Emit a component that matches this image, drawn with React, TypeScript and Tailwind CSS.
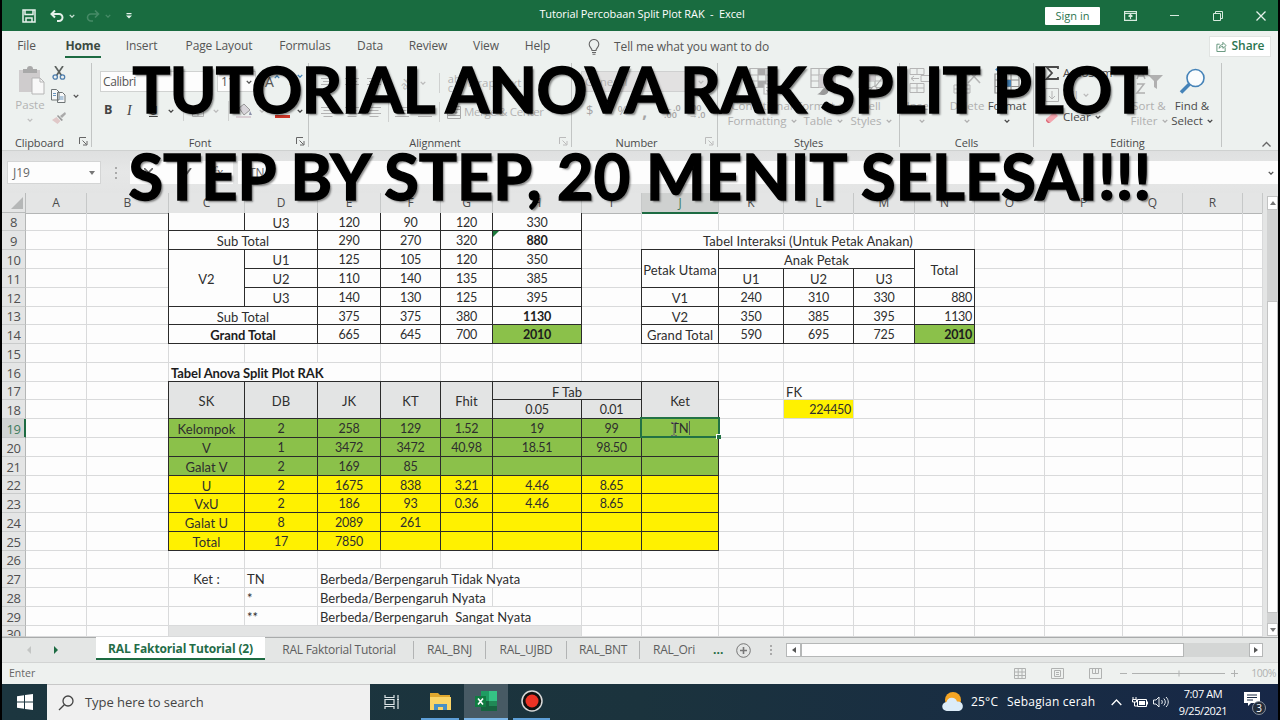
import type { ReactNode } from 'react'
import clsx from 'clsx'

type Fill = 'none' | 'white' | 'gray' | 'green' | 'yellow'

interface Cell {
  at: string
  text?: string
  cols?: number
  rows?: number
  fill?: Fill
  align?: 'left' | 'center' | 'right'
  bold?: boolean
  border?: boolean
}

const COLS = 'ABCDEFGHIJKLMNOPQR'.split('')
const FIRST_ROW = 8
const ROWS = Array.from({ length: 23 }, (_, i) => FIRST_ROW + i)

const GRID_COLS = 'grid-cols-[61px_82px_76px_73px_63px_60px_52px_89px_60px_77px_65px_70px_61px_60px_70px_78px_60px_60px_20px]'
const GRID_ROWS = 'grid-rows-[18px_19px_19px_19px_19px_18px_19px_19px_19px_18px_19px_19px_19px_19px_18px_19px_19px_19px_18px_19px_19px_19px_11px]'

const FILLS: Record<Fill, string> = {
  none: '',
  white: 'bg-[#fdfdfd]',
  gray: 'bg-[#e3e4e4]',
  green: 'bg-[#8bc14a]',
  yellow: 'bg-[#fff100]',
}

const line = (row: number, start: string, values: (string | number)[], extra: Partial<Cell> = {}): Cell[] =>
  values.map((v, i) => ({
    at: `${COLS[COLS.indexOf(start) + i]}${row}`,
    text: String(v),
    border: true,
    ...extra,
  }))

const CELLS: Cell[] = [
  // treatment totals
  ...line(8, 'C', ['', 'U3', 120, 90, 120, 330]),
  { at: 'C9', cols: 2, text: 'Sub Total', border: true },
  ...line(9, 'E', [290, 270, 320]),
  { at: 'H9', text: '880', bold: true, border: true },
  { at: 'C10', rows: 3, text: 'V2', border: true },
  ...line(10, 'D', ['U1', 125, 105, 120, 350]),
  ...line(11, 'D', ['U2', 110, 140, 135, 385]),
  ...line(12, 'D', ['U3', 140, 130, 125, 395]),
  { at: 'C13', cols: 2, text: 'Sub Total', border: true },
  ...line(13, 'E', [375, 375, 380]),
  { at: 'H13', text: '1130', bold: true, border: true },
  { at: 'C14', cols: 2, text: 'Grand Total', bold: true, border: true },
  ...line(14, 'E', [665, 645, 700]),
  { at: 'H14', text: '2010', bold: true, fill: 'green', border: true },

  // interaction table
  { at: 'J9', cols: 5, text: 'Tabel Interaksi (Untuk Petak Anakan)', fill: 'white' },
  { at: 'J10', rows: 2, text: 'Petak Utama', border: true },
  { at: 'K10', cols: 3, text: 'Anak Petak', border: true },
  { at: 'N10', rows: 2, text: 'Total', border: true },
  ...line(11, 'K', ['U1', 'U2', 'U3']),
  ...line(12, 'J', ['V1', 240, 310, 330]),
  { at: 'N12', text: '880', align: 'right', border: true },
  ...line(13, 'J', ['V2', 350, 385, 395]),
  { at: 'N13', text: '1130', align: 'right', border: true },
  ...line(14, 'J', ['Grand Total', 590, 695, 725]),
  { at: 'N14', text: '2010', align: 'right', bold: true, fill: 'green', border: true },

  // anova table
  { at: 'C16', cols: 3, text: 'Tabel Anova Split Plot RAK', bold: true, align: 'left', fill: 'white' },
  ...line(17, 'C', ['SK', 'DB', 'JK', 'KT', 'Fhit'], { rows: 2, fill: 'gray' }),
  { at: 'H17', cols: 2, text: 'F Tab', fill: 'gray', border: true },
  { at: 'J17', rows: 2, text: 'Ket', fill: 'gray', border: true },
  ...line(18, 'H', ['0.05', '0.01'], { fill: 'gray' }),
  ...line(19, 'C', ['Kelompok', 2, 258, 129, '1.52', 19, 99, ''], { fill: 'green' }),
  ...line(20, 'C', ['V', 1, 3472, 3472, '40.98', '18.51', '98.50', ''], { fill: 'green' }),
  ...line(21, 'C', ['Galat V', 2, 169, 85, '', '', '', ''], { fill: 'green' }),
  ...line(22, 'C', ['U', 2, 1675, 838, '3.21', '4.46', '8.65', ''], { fill: 'yellow' }),
  ...line(23, 'C', ['VxU', 2, 186, 93, '0.36', '4.46', '8.65', ''], { fill: 'yellow' }),
  ...line(24, 'C', ['Galat U', 8, 2089, 261, '', '', '', ''], { fill: 'yellow' }),
  ...line(25, 'C', ['Total', 17, 7850, '', '', '', '', ''], { fill: 'yellow' }),

  { at: 'L17', text: 'FK', align: 'left' },
  { at: 'L18', text: '224450', align: 'right', fill: 'yellow' },

  // legend
  { at: 'C27', text: 'Ket :' },
  { at: 'D27', text: 'TN', align: 'left' },
  { at: 'E27', cols: 4, text: 'Berbeda/Berpengaruh Tidak Nyata', align: 'left', fill: 'white' },
  { at: 'D28', text: '*', align: 'left' },
  { at: 'E28', cols: 3, text: 'Berbeda/Berpengaruh Nyata', align: 'left', fill: 'white' },
  { at: 'D29', text: '**', align: 'left' },
  { at: 'E29', cols: 4, text: 'Berbeda/Berpengaruh  Sangat Nyata', align: 'left', fill: 'white' },
  { at: 'C30', cols: 6, fill: 'gray' },
]

function SheetCell({ cell }: { cell: Cell }) {
  const col = COLS.indexOf(cell.at[0]) + 1
  const row = Number(cell.at.slice(1)) - FIRST_ROW + 1
  const numeric = /^[\d.]+$/.test(cell.text ?? '')
  return (
    <div
      style={{ gridColumn: `${col} / span ${cell.cols ?? 1}`, gridRow: `${row} / span ${cell.rows ?? 1}` }}
      className={clsx(
        'flex min-w-0 items-center overflow-hidden whitespace-pre leading-none',
        cell.border ? '-ml-px -mt-px border border-[#2b2b2b] pt-[3px]' : 'mb-px mr-px pt-[3px]',
        FILLS[cell.fill ?? (cell.border ? 'white' : 'none')],
        cell.align === 'left' && 'justify-start pl-[2px]',
        cell.align === 'right' && 'justify-end pr-[2px]',
        (!cell.align || cell.align === 'center') && 'justify-center',
        cell.bold ? 'font-bold text-[#1c1c1c]' : 'text-[#2e2e2e]',
        numeric ? 'text-[12.5px] tracking-[-0.3px]' : cell.bold ? 'text-[13px] tracking-[-0.1px]' : 'text-[13px] tracking-[0.05px]',
      )}
    >
      {cell.text}
    </div>
  )
}

function Chevron({ className = 'text-[#555]' }: { className?: string }) {
  return (
    <svg viewBox="0 0 8 5" className={clsx('h-[4px] w-[6px] shrink-0', className)} fill="none" stroke="currentColor" strokeWidth="1.8">
      <path d="M1 1l3 3 3-3" />
    </svg>
  )
}

function Launcher({ className = 'text-[#666]' }: { className?: string }) {
  return (
    <svg viewBox="0 0 9 9" className={clsx('absolute bottom-[1px] right-[3px] h-[9px] w-[9px]', className)} fill="none" stroke="currentColor">
      <path d="M.5 7V.5H7M3.5 3.5l4 4M8 4v4H4" />
    </svg>
  )
}

function Group({ label, width, launcher, children }: { label: string; width: string; launcher?: string; children: ReactNode }) {
  return (
    <section className={clsx('relative flex h-[84px] shrink-0 flex-col border-r border-[#c2c5c4]', width)}>
      <div className="h-[73px] shrink-0">{children}</div>
      <div className="text-center text-[11px] leading-[14px] tracking-[-0.1px] text-[#4a4a4a]">{label}</div>
      {launcher && <Launcher className={launcher} />}
    </section>
  )
}

function Lines({ widths, className = '' }: { widths: number[]; className?: string }) {
  return (
    <svg viewBox="0 0 14 13" className={clsx('h-[13px] w-[14px] shrink-0 text-[#b3b3b3]', className)} stroke="currentColor">
      {widths.map((w, i) => (
        <path key={i} d={`M${(14 - w) / 2} ${i * 3 + 1.5}h${w}`} />
      ))}
    </svg>
  )
}

function GridIcon({ active = false, children }: { active?: boolean; children?: ReactNode }) {
  return (
    <svg viewBox="0 0 28 28" className={clsx('h-[28px] w-[28px]', active ? 'text-[#8c8c8c]' : 'text-[#b5b5b5]')} fill="none" stroke="currentColor" strokeWidth="1.2">
      <path d={active ? 'M2 7h24v19H2zM2 13h24M2 19.500h24M10 7v19M18 7v19' : 'M2 1.500h24v19H2zM2 8h24M2 14h24M10 1.500v19M18 1.500v19'} />
      {active && (
        <>
          <path d="M3 2.500h21M6 0L3 2.500 6 5M21 0l3 2.500L21 5" stroke="#4583b8" />
          <path d="M10 13h8v6.500h-8z" fill="#4583b8" stroke="none" />
        </>
      )}
      {children}
    </svg>
  )
}

function BigButton({ icon, lines, width, dark, chevronBelow }: { icon: ReactNode; lines: string[]; width: string; dark?: boolean; chevronBelow?: boolean }) {
  const tone = dark ? 'text-[#4a4a4a]' : 'text-[#b0b0b0]'
  return (
    <div className={clsx('flex shrink-0 flex-col items-center text-[11.5px] leading-[15px]', tone, width)}>
      <div className="flex h-[35px] items-center pt-[1px]">{icon}</div>
      <div className="whitespace-nowrap">{lines[0]}</div>
      <div className="flex h-[15px] items-center gap-1 whitespace-nowrap">
        {lines[1]}
        {(lines[1] || chevronBelow) && <Chevron className={tone} />}
      </div>
    </div>
  )
}

function TitleBar() {
  return (
    <header className="flex h-[31px] shrink-0 items-center bg-[#196c40] text-white">
      <div className="flex w-[420px] items-center pl-[20px]">
        <svg viewBox="0 0 14 14" className="h-[14px] w-[14px]" fill="none" stroke="#e6f1eb" strokeWidth="1.5">
          <path d="M1 1h12v12H1zM3 1v4.500h8V1M4 13V9h6v4" />
        </svg>
        <svg viewBox="0 0 14 12" className="ml-[14px] h-[12px] w-[14px]" fill="none" stroke="#e6f1eb" strokeWidth="2">
          <path d="M5 .5L1.500 4 5 7.500M1.500 4H9a3.500 3.500 0 010 7H7" />
        </svg>
        <Chevron className="ml-[5px] text-[#c7dfd2]" />
        <svg viewBox="0 0 14 12" className="ml-[11px] h-[12px] w-[14px]" fill="none" stroke="#468a66" strokeWidth="1.600">
          <path d="M9 .5L12.500 4 9 7.500M12.500 4H5a3.500 3.500 0 000 7h2" />
        </svg>
        <Chevron className="ml-[5px] text-[#468a66]" />
        <svg viewBox="0 0 6 6" className="ml-[15px] h-[6px] w-[6px]">
          <path d="M.5 0h5v1.200h-5zM0 2.500h6l-3 3z" fill="#e6f1eb" />
        </svg>
      </div>
      <h1 className="-mt-[2px] w-[440px] whitespace-pre text-center text-[11px] tracking-[-0.1px]">Tutorial Percobaan Split Plot RAK  -  Excel</h1>
      <div className="flex flex-1 items-center justify-end pr-[12px]">
        <button type="button" className="mr-[24px] h-[18px] w-[55px] rounded-[1px] bg-white text-[11px] leading-[18px] text-[#2c7550]">Sign in</button>
        <svg viewBox="0 0 13 10" className="mr-[33px] h-[10px] w-[13px]" fill="none" stroke="#d8eadf" strokeWidth="1.200">
          <path d="M.6 .6h11.800v8.800H.6zM.6 2.500h11.800M6.500 8V4M4.500 5.500l2-2 2 2" />
        </svg>
        <svg viewBox="0 0 9 1" className="mr-[34px] h-px w-[9px] overflow-visible" stroke="#d8eadf">
          <path d="M0 .5h9" />
        </svg>
        <svg viewBox="0 0 10 10" className="mr-[33px] h-[10px] w-[10px]" fill="none" stroke="#d8eadf">
          <path d="M.5 2.500h7v7h-7zM2.500 2.500v-2h7v7h-2" />
        </svg>
        <svg viewBox="0 0 10 10" className="h-[10px] w-[10px]" stroke="#e6f1eb" strokeWidth="1.300">
          <path d="M.5 .5l9 9M9.500 .5l-9 9" />
        </svg>
      </div>
    </header>
  )
}

const MENU = [
  ['File', 'w-[49px]'],
  ['Home', 'w-[64px]'],
  ['Insert', 'w-[53px]'],
  ['Page Layout', 'w-[102px]'],
  ['Formulas', 'w-[70px]'],
  ['Data', 'w-[60px]'],
  ['Review', 'w-[56px]'],
  ['View', 'w-[60px]'],
  ['Help', 'w-[43px]'],
]

function MenuTabs() {
  return (
    <nav className="flex h-[32px] shrink-0 items-center text-[12px] tracking-[-0.1px] text-[#555]">
      {MENU.map(([label, width]) => (
        <div key={label} className={clsx('flex h-full shrink-0 justify-center whitespace-nowrap', width)}>
          <span
            className={clsx(
              'h-[27px] border-b-2 leading-[30px]',
              label === 'Home' ? 'border-[#1d6b42] font-bold text-[#3c4a42]' : 'border-transparent',
            )}
          >
            {label}
          </span>
        </div>
      ))}
      <svg viewBox="0 0 12 16" className="ml-[29px] h-[16px] w-[12px]" fill="none" stroke="#666" strokeWidth="1.100">
        <path d="M4 11.500C4 9 1.200 8.500 1.200 5.200a4.800 4.700 0 019.600 0C10.800 8.500 8 9 8 11.500zM4 13.500h4M4.500 15.300h3" />
      </svg>
      <span className="-mt-px ml-[14px] whitespace-nowrap">Tell me what you want to do</span>
      <button type="button" className="-mt-[2px] ml-auto mr-[7px] flex h-[21px] w-[62px] items-center justify-center gap-[5px] border border-[#e1e4e2] bg-white font-semibold text-[#2c7550]">
        <svg viewBox="0 0 12 12" className="h-[11px] w-[11px]" fill="none" stroke="#5b8f74">
          <path d="M4 3.500H1v8h9V7M3.500 8c0-3 1.500-4 4-4V1.500L11 5 7.500 8V6c-2 0-3 .5-4 2z" />
        </svg>
        Share
      </button>
    </nav>
  )
}

function Ribbon() {
  return (
    <div className="flex h-[87px] shrink-0 bg-[#edf1ef] text-[#b3b3b3]">
      <Group label="Clipboard" width="w-[90px] pr-[14px]" launcher="text-[#666]">
        <div className="flex pl-[14px] pt-[3px]">
          <div className="flex w-[28px] flex-col items-center text-[11.5px] leading-[15px]">
            <svg viewBox="0 0 27 29" className="ml-[2px] h-[29px] w-[27px]">
              <path d="M1 4h21v22H1z" fill="#cfcccd" />
              <path d="M5 3h4a3 3 0 016 0h4v4H5z" fill="#a9a9a9" />
              <path d="M14 12h8l4 4v12H14z" fill="#f8f8f8" stroke="#b5b5b5" />
              <path d="M22 12v4h4" fill="none" stroke="#b5b5b5" />
            </svg>
            <span className="mt-[2px]">Paste</span>
            <Chevron className="mt-[6px] text-[#c0c0c0]" />
          </div>
          <div className="ml-[7px] flex flex-col">
            <svg viewBox="0 0 14 14" className="ml-[1px] h-[14px] w-[14px]" fill="none">
              <path d="M3 0l6.500 9.500M11 0L4.500 9.500" stroke="#5d625f" strokeWidth="1.700" />
              <circle cx="3.200" cy="11" r="2.200" stroke="#4f7fae" strokeWidth="1.300" />
              <circle cx="10.500" cy="11" r="2.200" stroke="#4f7fae" strokeWidth="1.300" />
            </svg>
            <div className="mt-[9px] flex items-center gap-[7px]">
              <svg viewBox="0 0 15 14" className="h-[14px] w-[15px]" fill="#f7f8f8" stroke="#6e7475">
                <path d="M.5 .5h5l2.500 2.500v8H.5zM6.500 3.500h5l2.500 2.500v7.500H6.500z" />
                <path d="M2 4.500h3M2 6.500h3M8.500 8h4M8.500 10h4" stroke="#6b97bf" />
              </svg>
              <Chevron />
            </div>
            <svg viewBox="0 0 14 12" className="ml-[1px] mt-[9px] h-[12px] w-[14px]">
              <path d="M13 0L8 4l2 2 4-4z" fill="#aaa" />
              <path d="M6 3l5 5-1.500 1L5 4z" fill="#999" />
              <path d="M4.500 5l4 4-3 3L0 8z" fill="#e0c8c8" />
            </svg>
          </div>
        </div>
      </Group>

      <Group label="Font" width="w-[217px]" launcher="text-[#666]">
        <div className="flex items-center gap-[4px] pl-[8px] pt-[8px] text-[12px] text-[#555]">
          <div className="flex h-[21px] w-[113px] items-center border border-[#d0d2d1] bg-[#fdfdfd] pl-[2px] tracking-[-0.4px]">Calibri</div>
          <div className="flex h-[21px] w-[39px] items-center justify-between border border-[#d0d2d1] bg-[#fdfdfd] px-[3px]">11<Chevron /></div>
          <span className="ml-[5px] text-[14px]">A</span>
          <Chevron className="-ml-[4px] -mt-[10px] rotate-180 text-[#4583b8]" />
          <span className="ml-[6px] text-[11px]">A</span>
          <Chevron className="-ml-[4px] -mt-[12px] text-[#4583b8]" />
        </div>
        <div className="flex h-[22px] items-center pl-[12px] pt-[15px] text-[#444]">
          <b className="w-[10px] text-[12.5px]">B</b>
          <i className="ml-[13px] w-[8px] font-['Liberation_Serif'] text-[14px]">I</i>
          <u className="ml-[14px] w-[10px] text-[12px]">U</u>
          <Chevron className="ml-[9px]" />
          <span className="ml-[9px] h-[20px] w-px bg-[#cfd1d0]" />
          <svg viewBox="0 0 12 12" className="ml-[8px] h-[12px] w-[12px]" fill="none" stroke="#b5b5b5">
            <path d="M.5 .5h11v11H.5zM6 0v12M0 6h12" />
          </svg>
          <Chevron className="ml-[9px] text-[#bbb]" />
          <span className="ml-[9px] h-[20px] w-px bg-[#cfd1d0]" />
          <svg viewBox="0 0 16 15" className="ml-[7px] h-[15px] w-[16px]">
            <path d="M3 5l5-4 6 6-6 5z" fill="#d8d5da" stroke="#999" />
            <path d="M0 13h15v2H0z" fill="#d9cfd4" />
            <path d="M14 8l2 4h-3z" fill="#8b8fa8" />
          </svg>
          <Chevron className="ml-[7px] text-[#bbb]" />
          <span className="ml-[10px] flex w-[15px] flex-col items-center text-[11px] leading-[12px]">
            A
            <span className="h-[3px] w-[15px] bg-[#cc3527]" />
          </span>
          <Chevron className="ml-[7px]" />
        </div>
      </Group>

      <Group label="Alignment" width="w-[263px] pr-[10px]" launcher="text-[#bbb]">
        <div className="flex h-[21px] items-center pl-[12px] pt-[19px]">
          <Lines widths={[14, 10, 14]} />
          <Lines widths={[14, 10, 14]} className="ml-[10px]" />
          <Lines widths={[14, 10, 14]} className="ml-[8px]" />
          <span className="ml-[19px] -rotate-45 text-[11px]">ab</span>
          <Chevron className="ml-[7px] text-[#bbb]" />
          <span className="ml-[13px] h-[20px] w-px bg-[#cfd1d0]" />
          <span className="ml-[8px] text-[11px] leading-[9px]">ab<br />c</span>
          <span className="ml-[6px] whitespace-nowrap text-[11.5px]">Wrap Text</span>
        </div>
        <div className="flex h-[22px] items-center pl-[12px] pt-[28px]">
          <Lines widths={[14, 9, 14, 9]} />
          <Lines widths={[14, 9, 14, 9]} className="ml-[10px]" />
          <Lines widths={[14, 9, 14, 9]} className="ml-[8px]" />
          <span className="ml-[7px] h-[20px] w-px bg-[#cfd1d0]" />
          <Lines widths={[14, 9, 9, 14]} className="ml-[6px]" />
          <Lines widths={[14, 9, 9, 14]} className="ml-[9px]" />
          <span className="ml-[7px] h-[20px] w-px bg-[#cfd1d0]" />
          <svg viewBox="0 0 14 13" className="ml-[7px] h-[13px] w-[14px] shrink-0" fill="none" stroke="#a8a8a8">
            <path d="M.5 .5h13v12H.5zM.5 3.500h13M.5 9.500h13M4 6.500h6M5.500 5L4 6.500 5.500 8M8.500 5L10 6.500 8.500 8" />
          </svg>
          <span className="ml-[3px] whitespace-nowrap text-[11.5px] tracking-[-0.35px]">Merge &amp; Center</span>
        </div>
      </Group>

      <Group label="Number" width="w-[146px] pr-[16px]" launcher="text-[#bbb]">
        <div className="ml-[9px] flex h-[29px] w-[127px] flex-col justify-end">
          <div className="flex h-[21px] items-center justify-between border border-[#cfd0d0] bg-[#e2e1e1] px-[3px] text-[11.5px]">
            General
            <Chevron className="text-[#bbb]" />
          </div>
        </div>
        <div className="flex h-[22px] items-center pl-[14px] pt-[16px] text-[13px] text-[#a5a5a5]">
          <span className="w-[8px]">$</span>
          <span className="ml-[24px] w-[12px]">%</span>
          <b className="ml-[14px] w-[6px] text-[17px] leading-none">,</b>
          <span className="ml-[10px] h-[20px] w-px bg-[#d5d7d6]" />
          <span className="ml-[7px] text-[9px] font-semibold leading-[7px]">←.0<br />.00</span>
          <span className="ml-[8px] text-[9px] font-semibold leading-[7px]">.00<br />→.0</span>
        </div>
      </Group>

      <Group label="Styles" width="w-[182px]">
        <div className="flex pl-[8px]">
          <BigButton
            width="w-[72px]"
            lines={['Conditional', 'Formatting']}
            icon={
              <GridIcon>
                <path d="M10 2h7v6h-7zM10 14h8v6h-8z" fill="#aaa" stroke="none" />
                <path d="M16 17h10v10H16z" fill="#f3f5f4" />
                <path d="M18 20.500h6M18 23.500h6M23 18.500l-4 7" />
              </GridIcon>
            }
          />
          <BigButton
            width="w-[50px]"
            lines={['Format as', 'Table']}
            icon={
              <GridIcon>
                <path d="M10 8h16v12.500H10z" fill="#cfcccf" stroke="none" />
                <path d="M25 14l-8 8M17 21c-4 0-3 4-7 6 5 1 9 0 9-4z" fill="#999" stroke="#999" />
              </GridIcon>
            }
          />
          <BigButton
            width="w-[46px]"
            lines={['Cell', 'Styles']}
            icon={
              <GridIcon>
                <path d="M10 8h8v6h-8z" fill="#cfcccf" stroke="none" />
                <path d="M26 10l-8 10M18 19c-4 0-3 4-7 6 5 1 9 0 9-4z" fill="#eee" stroke="#aaa" />
              </GridIcon>
            }
          />
        </div>
      </Group>

      <Group label="Cells" width="w-[134px]">
        <div className="flex">
          <BigButton
            width="w-[44px]"
            chevronBelow
            lines={['Insert', '']}
            icon={
              <svg viewBox="0 0 28 28" className="h-[28px] w-[28px]" fill="none" stroke="#b5b5b5">
                <path d="M2 1.500h14v6H2zM9 1.500v6M2 16.500h14v9H2zM9 16.500v9M2 21h14M13 8.500h12v6H13zM3 11.500h8M6 9l-3 2.500L6 14" />
              </svg>
            }
          />
          <BigButton
            width="w-[46px]"
            chevronBelow
            lines={['Delete', '']}
            icon={
              <svg viewBox="0 0 28 28" className="h-[28px] w-[28px]" fill="none" stroke="#b5b5b5">
                <path d="M1 2h16v6H1zM1 18h16v8H1zM9 18v8M1 22h16" />
                <path d="M15 3l12 13M27 3L15 16" strokeWidth="1.600" />
              </svg>
            }
          />
          <BigButton width="w-[34px]" chevronBelow dark lines={['Format', '']} icon={<GridIcon active />} />
        </div>
      </Group>

      <Group label="Editing" width="w-[188px]">
        <div className="flex">
          <div className="w-[88px] pl-[11px] text-[11.500px] leading-[22px]">
            <div className="-mt-px flex items-center gap-[4px] text-[#4a4a4a]">
              <svg viewBox="0 0 14 14" className="h-[14px] w-[14px]" fill="none" stroke="currentColor" strokeWidth="1.800">
                <path d="M13 3V1H1.500l5.500 6-5.500 6H13v-2" />
              </svg>
              AutoSum
            </div>
            <div className="flex items-center gap-[4px]">
              <svg viewBox="0 0 14 14" className="h-[14px] w-[14px]" fill="none" stroke="currentColor">
                <path d="M.5 .5h13v13H.5zM7 3v8M4 8l3 3 3-3" />
              </svg>
              Fill
              <Chevron className="ml-[1px] text-[#bbb]" />
            </div>
            <div className="flex items-center gap-[4px] text-[#4a4a4a]">
              <svg viewBox="0 0 14 14" className="h-[14px] w-[14px]">
                <path d="M1 9l8-7 4 4-8 7H3z" fill="#f3a5ae" />
                <path d="M1 9l4 4H3L1 11z" fill="#dc6b78" />
              </svg>
              Clear
              <Chevron />
            </div>
          </div>
          <div className="flex">
            <BigButton
              width="w-[54px]"
              lines={['Sort &', 'Filter']}
              icon={
                <svg viewBox="0 0 28 28" className="h-[28px] w-[28px]" fill="none" stroke="#b0b0b0" strokeWidth="1.500">
                  <path d="M2 12L6 2l4 10M3.500 9h5M2 17h7l-7 9h8" />
                  <path d="M13 8h15l-6 6v8l-3-2v-6z" fill="#b0b0b0" stroke="none" />
                </svg>
              }
            />
            <BigButton
              width="w-[32px]"
              dark
              lines={['Find &', 'Select']}
              icon={
                <svg viewBox="0 0 28 28" className="h-[28px] w-[28px]" fill="none" stroke="#4583b8">
                  <circle cx="17.500" cy="11" r="8.500" strokeWidth="1.600" fill="#fafcfd" />
                  <path d="M11.500 17L3 25.500" strokeWidth="3.500" />
                </svg>
              }
            />
          </div>
        </div>
      </Group>
      <svg viewBox="0 0 9 6" className="ml-auto mr-[7px] mt-[78px] h-[6px] w-[9px]" fill="none" stroke="#666" strokeWidth="1.300">
        <path d="M.5 5.500l4-4 4 4" />
      </svg>
    </div>
  )
}

function FormulaBar() {
  return (
    <div className="flex h-[43px] shrink-0 border-t border-[#cfd1d0] bg-gradient-to-b from-[#dfe0e0] via-[#e6e7e7] to-[#e3e4e4] pt-[10px] text-[12px] text-[#666]">
      <div className="ml-[5px] flex h-[23px] w-[94px] items-center justify-between border border-[#d4d5d5] bg-[#fdfdfd] pl-[5px] pr-[5px]">
        J19
        <span className="border-x-[3px] border-t-[4px] border-x-transparent border-t-[#777]" />
      </div>
      <div className="ml-[14px] mt-[6px] flex w-[2px] flex-col gap-[3px]">
        <span className="h-[2px] bg-[#aaa]" />
        <span className="h-[2px] bg-[#aaa]" />
        <span className="h-[2px] bg-[#aaa]" />
      </div>
      <div className="ml-[13px] flex h-[23px] w-[103px] items-center bg-[#fdfdfd] pl-[14px]">
        <svg viewBox="0 0 9 9" className="h-[9px] w-[9px]" stroke="#666" strokeWidth="1.600">
          <path d="M0 0l9 9M9 0L0 9" />
        </svg>
        <svg viewBox="0 0 11 9" className="ml-[28px] h-[9px] w-[11px]" fill="none" stroke="#666" strokeWidth="1.800">
          <path d="M1 5l3 3 6-8" />
        </svg>
        <i className="ml-[20px] font-['Liberation_Serif'] text-[15px]">fx</i>
      </div>
      <div className="ml-[5px] flex h-[23px] flex-1 items-center justify-between bg-[#fdfdfd] pl-[11px] pr-[4px]">
        TN
        <Chevron />
      </div>
    </div>
  )
}

function Sheet() {
  return (
    <div className="flex h-[444px] shrink-0 bg-[#e4e5e5]">
      <div className="w-[24px] shrink-0 text-[13px] tracking-[-0.4px] text-[#505050]">
        <div className="flex h-[20px] items-end justify-end border-b border-r border-[#b9bbbb] pb-[3px] pr-[2px]">
          <span className="border-b-[12px] border-l-[12px] border-b-[#b5b7b7] border-l-transparent" />
        </div>
        <div className={clsx('grid overflow-hidden', GRID_ROWS)}>
          {ROWS.map(row => (
            <div
              key={row}
              className={clsx(
                'flex min-h-0 items-center justify-center overflow-hidden border-b border-r pt-[2px] leading-[17px]',
                row === 19
                  ? 'border-b-[#c4c6c6] border-r-[#1d6b42] bg-[#d1d4d3] text-[#3f7d60] shadow-[inset_-1px_0_0_#1d6b42]'
                  : 'border-b-[#c9cbcb] border-r-[#b4b6b6]',
              )}
            >
              <span className={row === 30 ? 'mt-[5px]' : ''}>{row}</span>
            </div>
          ))}
        </div>
      </div>

      <div className="w-[1237px] shrink-0">
        <div className={clsx('grid h-[20px] text-[12px] text-[#4c4c4c]', GRID_COLS)}>
          {[...COLS, ''].map(col => (
            <div
              key={col}
              className={clsx(
                'border-b border-r pt-[1px] text-center leading-[18px]',
                col === 'J' ? 'border-b-2 border-b-[#1d6b42] border-r-[#c6c8c8] bg-[#cfd1d0] text-[#3f7d60]' : 'border-b-[#b4b6b6] border-r-[#c6c8c8]',
              )}
            >
              {col}
            </div>
          ))}
        </div>
        <div className={clsx("grid overflow-hidden bg-[#fdfdfd] font-['Lato'] text-[13px]", GRID_COLS, GRID_ROWS)}>
          {ROWS.map((row, r) =>
            [...COLS, ''].map((col, c) => (
              <div key={`${col}${row}`} style={{ gridColumn: c + 1, gridRow: r + 1 }} className="border-b border-r border-[#d9dadb]" />
            )),
          )}
          {CELLS.map(cell => (
            <SheetCell key={cell.at} cell={cell} />
          ))}
          {/* comment marker on the first subtotal */}
          <svg viewBox="0 0 6 6" className="col-start-8 row-start-2 h-[6px] w-[6px]">
            <path d="M0 0h6L0 6z" fill="#1d7a3c" />
          </svg>
          {/* cell in edit mode */}
          <div className="relative col-start-10 row-start-12 -ml-[2px] -mr-[1px] -mt-[2px] flex items-center justify-center border-2 border-[#227244] pl-[1px] pt-[2px] leading-none text-[#2e2e2e]">
            TN
            <span className="-mt-[2px] h-[14px] w-px bg-[#555]" />
            <svg viewBox="0 0 6 14" className="absolute left-[29px] top-[3px] h-[14px] w-[6px]" fill="none" stroke="#6b6b6b">
              <path d="M0 .5h2l1 1 1-1h2M0 13.500h2l1-1 1 1h2M3 1v12" />
            </svg>
            <span className="absolute -bottom-[3px] -right-[3px] h-[5px] w-[5px] border-l border-t border-white bg-[#227244]" />
          </div>
        </div>
      </div>

      <div className="flex flex-1 flex-col items-end pt-[3px]">
        <div className="flex h-[14px] w-[11px] items-center justify-center border border-[#c2c3c3] bg-white">
          <span className="border-x-[3px] border-b-[4px] border-x-transparent border-b-[#777]" />
        </div>
        <div className="h-[91px] w-[11px] bg-[#d2d3d3]" />
        <div className="h-[312px] w-[11px] border border-[#c2c3c3] bg-[#fdfdfd]" />
        <div className="h-[10px] w-[11px] bg-[#d2d3d3]" />
        <div className="flex h-[13px] w-[11px] items-center justify-center border border-[#c2c3c3] bg-white">
          <span className="border-x-[3px] border-t-[4px] border-x-transparent border-t-[#777]" />
        </div>
      </div>
    </div>
  )
}

const SHEET_TABS = [
  ['RAL Faktorial Tutorial', 'w-[149px]'],
  ['RAL_BNJ', 'w-[72px]'],
  ['RAL_UJBD', 'w-[81px]'],
  ['RAL_BNT', 'w-[73px]'],
]

function SheetTabs() {
  return (
    <div className="flex h-[26px] shrink-0 items-center border-b border-t border-b-[#d2d4d3] border-t-[#a9abab] bg-[#e4e6e5] text-[12px] tracking-[-0.25px] text-[#5e5e5e]">
      <div className="flex w-[94px] items-center pl-[25px]">
        <span className="border-y-[4px] border-r-[4px] border-y-transparent border-r-[#c3c5c4]" />
        <span className="ml-[23px] border-y-[4px] border-l-[4px] border-y-transparent border-l-[#1d6b42]" />
      </div>
      <div className="-mt-[3px] flex h-[23px] w-[169px] shrink-0 items-center justify-center whitespace-nowrap border-b-2 border-[#1d6b42] bg-white pt-[2px] font-bold tracking-[-0.15px] text-[#246c47]">
        RAL Faktorial Tutorial (2)
      </div>
      {SHEET_TABS.map(([label, width]) => (
        <div key={label} className={clsx('shrink-0 whitespace-nowrap border-r border-[#b2b4b4] text-center leading-[18px]', width)}>{label}</div>
      ))}
      <span className="-mt-px ml-[13px]">RAL_Ori</span>
      <b className="-mt-px ml-[18px] tracking-normal text-[#1d6b42]">...</b>
      <svg viewBox="0 0 15 15" className="ml-[13px] h-[15px] w-[15px] shrink-0" fill="none" stroke="#777">
        <circle cx="7.500" cy="7.500" r="6.800" />
        <path d="M7.500 4v7M4 7.500h7" strokeWidth="1.600" />
      </svg>
      <div className="ml-auto mr-[15px] flex w-[493px] shrink-0 items-center">
        <svg viewBox="0 0 2 10" className="h-[10px] w-[2px]" fill="#aaa">
          <path d="M0 0h2v2H0zM0 4h2v2H0zM0 8h2v2H0z" />
        </svg>
        <div className="ml-[14px] flex h-[14px] w-[477px]">
          <div className="flex w-[15px] items-center justify-center border border-[#b5b7b7] bg-white">
            <span className="border-y-[3px] border-r-[4px] border-y-transparent border-r-[#555]" />
          </div>
          <div className="w-[383px] border border-[#b5b7b7] bg-[#fdfdfd]" />
          <div className="flex-1 bg-[#d4d6d5]" />
          <div className="flex w-[14px] items-center justify-center border border-[#b5b7b7] bg-white">
            <span className="border-y-[3px] border-l-[4px] border-y-transparent border-l-[#555]" />
          </div>
        </div>
      </div>
    </div>
  )
}

function StatusBar() {
  return (
    <div className="flex h-[21px] shrink-0 items-center bg-[#eef1ef] pl-[7px] text-[10.500px] text-[#666]">
      Enter
      <div className="ml-auto flex items-center pr-[2px] text-[#b0b2b1]">
        <svg viewBox="0 0 12 11" className="h-[11px] w-[12px]" fill="none" stroke="currentColor">
          <path d="M.5 .5h11v10H.5zM.5 4h11M.5 7.500h11M4.200 .5v10M8 .5v10" />
        </svg>
        <svg viewBox="0 0 13 11" className="ml-[25px] h-[11px] w-[13px]" fill="none" stroke="currentColor">
          <path d="M.5 .5h12v10H.5zM3.500 2.500h6v6h-6zM5 4.500h3M5 6.500h3" />
        </svg>
        <svg viewBox="0 0 13 11" className="ml-[25px] h-[11px] w-[13px]" fill="none" stroke="currentColor">
          <path d="M.5 .5h12v10H.5zM3.500 .5v5h6v-5M6.500 .5v5" />
        </svg>
        <svg viewBox="0 0 120 9" className="ml-[18px] h-[9px] w-[120px]" fill="none" stroke="currentColor">
          <path d="M0 4.500h7M12 4.500h93M59 1.500v6M111 4.500h7M114.500 1v7" />
        </svg>
        <span className="ml-[11px] tracking-[-0.5px]">100%</span>
      </div>
    </div>
  )
}

function Taskbar() {
  return (
    <footer className="flex h-[36px] shrink-0 items-stretch bg-gradient-to-r from-[#1c363f] via-[#1b333d] to-[#172747] text-white">
      <div className="flex w-[45px] items-center justify-center">
        <svg viewBox="0 0 16 16" className="h-[16px] w-[16px]" fill="#fff">
          <path d="M0 2.200l7-1v6.300H0zM8 1l8-1v7.500H8zM0 8.500h7v6.300l-7-1zM8 8.500h8V16l-8-1z" />
        </svg>
      </div>
      <div className="flex w-[323px] items-center border-t border-[#c8c8c8] bg-[#f0f0f0] pl-[11px]">
        <svg viewBox="0 0 16 16" className="h-[16px] w-[16px]" fill="none" stroke="#444" strokeWidth="1.300">
          <circle cx="10" cy="6" r="5" />
          <path d="M6.300 9.700L1 15" />
        </svg>
        <span className="ml-[11px] text-[13px] tracking-[-0.05px] text-[#444]">Type here to search</span>
      </div>
      <div className="flex w-[44px] items-center justify-center">
        <svg viewBox="0 0 16 14" className="h-[14px] w-[16px]" fill="none" stroke="#dfe6e8" strokeWidth="1.200">
          <path d="M1 0v2.500h9V0M1 14v-2.500h9V14M1 4.500h9v5H1zM14 0v3M14 6v8" />
          <path d="M13 3.500h2v2h-2z" fill="#dfe6e8" stroke="none" />
        </svg>
      </div>
      <div className="ml-[7px] flex w-[38px] items-center justify-center border-b-2 border-[#5d9fd8]">
        <svg viewBox="0 0 21 19" className="h-[19px] w-[21px]">
          <path d="M0 1h8l2 2h10v15H0z" fill="#e0a82e" />
          <path d="M0 5h21v13H0z" fill="#fbd567" />
          <path d="M4 18v-6h13v6h-4v-3H8v3z" fill="#4a90c4" />
        </svg>
      </div>
      <div className="ml-[5px] flex w-[44px] items-center justify-center border-b-2 border-[#7bb6e8] bg-[#475a64]">
        <svg viewBox="0 0 22 20" className="h-[20px] w-[22px]">
          <path d="M6 0h8v20H6z" fill="#1f9c62" />
          <path d="M14 0h8v10h-8z" fill="#35c285" />
          <path d="M6 10h16v10H6z" fill="#17633f" />
          <path d="M14 10h8v5h-8z" fill="#218956" />
          <path d="M0 5h11v11H0z" fill="#107c41" />
          <path d="M3 7.500l5 6M8 7.500l-5 6" stroke="#fff" strokeWidth="1.600" />
        </svg>
      </div>
      <div className="ml-[5px] flex w-[37px] items-center justify-center border-b-2 border-[#5d9fd8]">
        <svg viewBox="0 0 22 22" className="h-[22px] w-[22px]">
          <circle cx="11" cy="11" r="10" fill="#111" stroke="#d9d9d9" strokeWidth="1.500" />
          <circle cx="11" cy="11" r="6.500" fill="#ee3224" />
        </svg>
      </div>

      <div className="ml-auto flex items-center text-[12px]">
        <svg viewBox="0 0 22 20" className="h-[20px] w-[22px]">
          <circle cx="11" cy="8" r="8" fill="#f5a524" />
          <path d="M5 19a4.500 4.500 0 01-.5-9A5.500 5.500 0 0115 9.500a4.800 4.800 0 012 9.500z" fill="#dcecf8" />
        </svg>
        <span className="ml-[7px] w-[36px] tracking-[0.2px]">25°C</span>
        <span className="w-[100px] whitespace-nowrap tracking-[0.2px]">Sebagian cerah</span>
        <svg viewBox="0 0 11 7" className="ml-[4px] h-[7px] w-[11px]" fill="none" stroke="#fff" strokeWidth="1.300">
          <path d="M.7 6l4.800-5 4.800 5" />
        </svg>
        <svg viewBox="0 0 16 11" className="ml-[10px] h-[11px] w-[16px]" fill="none" stroke="#fff">
          <path d="M5.500 2.500h9v7h-9zM15.500 4.500v3" />
          <path d="M7 4h6v4H7z" fill="#fff" stroke="none" />
          <path d="M1 0v2M4 0v2M.5 2.500h4v2.500h-4zM2.500 5v4h3" />
        </svg>
        <svg viewBox="0 0 16 12" className="ml-[5px] h-[12px] w-[16px]" fill="none" stroke="#e8edf2">
          <path d="M.5 4h2.500l3-3v10L3 8H.5zM8.500 4c1 1 1 3 0 4M10.800 2.500c2 2 2 5 0 7M13 1c3 3 3 7 0 10" />
        </svg>
        <div className="ml-[7px] w-[54px] text-center text-[11px] leading-[17px] tracking-[-0.4px]">
          <div>7:07 AM</div>
          <div>9/25/2021</div>
        </div>
        <div className="relative ml-[14px] mr-[12px] h-[20px] w-[22px]">
          <svg viewBox="0 0 16 14" className="h-[14px] w-[16px]">
            <path d="M0 0h16v11H7l-3 3v-3H0z" fill="#fff" />
            <path d="M3 3h10M3 5.500h10M3 8h6" stroke="#1a2b45" />
          </svg>
          <span className="absolute bottom-[-3px] right-0 h-[14px] w-[14px] rounded-full border border-[#8b93a0] bg-[#222c3a] text-center text-[10px] leading-[12px]">3</span>
        </div>
      </div>
    </footer>
  )
}

export default function App() {
  return (
    <div className="relative h-[720px] w-[1280px] overflow-hidden border-x-2 border-black bg-[#edf1ef] font-['Open_Sans',sans-serif]">
      <div className="flex h-full flex-col">
        <TitleBar />
        <MenuTabs />
        <Ribbon />
        <FormulaBar />
        <Sheet />
        <SheetTabs />
        <StatusBar />
        <Taskbar />
      </div>

      <div className="absolute left-0 top-[45px] w-[1276px] whitespace-nowrap text-center font-['Lato'] text-[63px] font-bold leading-[87px] text-black [-webkit-text-stroke:1.5px_black] [text-shadow:2px_2px_2px_rgba(0,0,0,0.45)]">
        <div className="tracking-[-0.65px]">TUTORIAL ANOVA RAK SPLIT PLOT</div>
        <div className="tracking-[0.15px]">STEP BY STEP, 20 MENIT SELESAI!!!</div>
      </div>
    </div>
  )
}
